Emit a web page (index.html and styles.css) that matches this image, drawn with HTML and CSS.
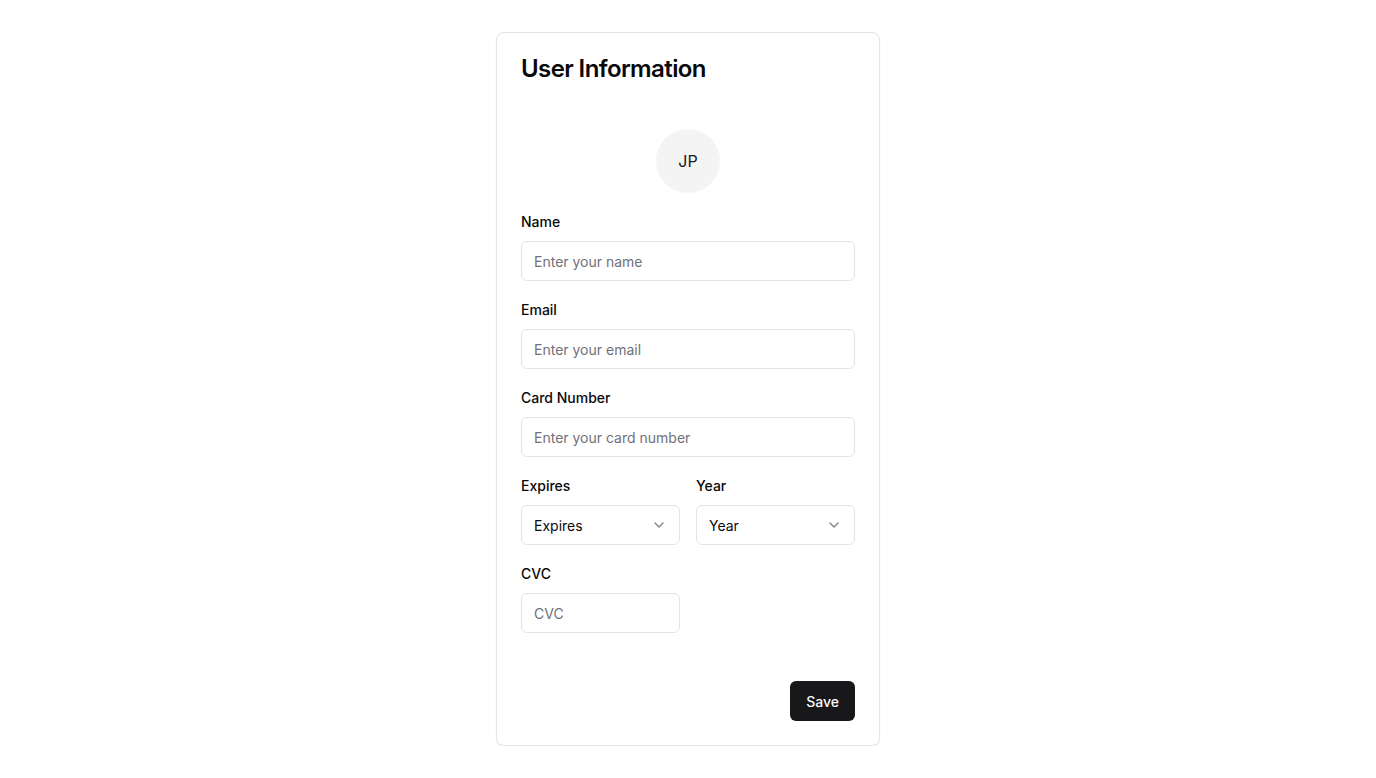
FILE: index.html
```html
<!DOCTYPE html>
<html lang="en">
<head>
<meta charset="utf-8">
<title>User Information</title>
<link rel="stylesheet" href="styles.css">
</head>
<body>
<main class="page">
  <section class="card">
    <header class="card-header">
      <h1 class="card-title">User Information</h1>
    </header>
    <div class="card-content">
      <div class="avatar-row">
        <div class="avatar">JP</div>
      </div>
      <div class="field">
        <label class="label" for="name">Name</label>
        <input class="input" id="name" type="text" placeholder="Enter your name">
      </div>
      <div class="field">
        <label class="label" for="email">Email</label>
        <input class="input" id="email" type="email" placeholder="Enter your email">
      </div>
      <div class="field">
        <label class="label" for="card">Card Number</label>
        <input class="input" id="card" type="text" placeholder="Enter your card number">
      </div>
      <div class="grid-2">
        <div class="field">
          <label class="label">Expires</label>
          <button class="select" type="button"><span>Expires</span>
            <svg class="chev" viewBox="0 0 24 24" width="16" height="16" fill="none" stroke="currentColor" stroke-width="2" stroke-linecap="round" stroke-linejoin="round"><path d="m6 9 6 6 6-6"/></svg>
          </button>
        </div>
        <div class="field">
          <label class="label">Year</label>
          <button class="select" type="button"><span>Year</span>
            <svg class="chev" viewBox="0 0 24 24" width="16" height="16" fill="none" stroke="currentColor" stroke-width="2" stroke-linecap="round" stroke-linejoin="round"><path d="m6 9 6 6 6-6"/></svg>
          </button>
        </div>
      </div>
      <div class="grid-2">
        <div class="field">
          <label class="label" for="cvc">CVC</label>
          <input class="input" id="cvc" type="text" placeholder="CVC">
        </div>
      </div>
      <div class="actions">
        <button class="btn" type="button">Save</button>
      </div>
    </div>
  </section>
</main>
</body>
</html>
```
FILE: styles.css
```css
* { box-sizing: border-box; }
html, body { margin: 0; padding: 0; background: #ffffff; }
body {
  font-family: Inter, "Liberation Sans", sans-serif;
  color: #09090b;
  -webkit-font-smoothing: antialiased;
}
.page {
  display: flex;
  justify-content: center;
  padding-top: 32px;
}
.card {
  width: 384px;
  border: 1px solid #e4e4e7;
  border-radius: 8px;
  background: #fff;
  box-shadow: 0 1px 2px rgba(0,0,0,0.05);
}
.card-header { padding: 24px; }
.card-title {
  margin: 0;
  font-size: 24px;
  line-height: 24px;
  font-weight: 600;
  letter-spacing: -0.025em;
}
.card-content {
  padding: 0 24px 24px;
  display: flex;
  flex-direction: column;
  gap: 19px;
}
.avatar-row {
  display: flex;
  justify-content: center;
  padding-top: 24px;
}
.avatar {
  width: 64px;
  height: 64px;
  border-radius: 50%;
  background: #f4f4f5;
  display: flex;
  align-items: center;
  justify-content: center;
  font-size: 16px;
  color: #18181b;
}
.field {
  display: flex;
  flex-direction: column;
  gap: 9px;
}
.label {
  font-size: 14px;
  line-height: 20px;
  font-weight: 500;
}
.input, .select {
  height: 40px;
  width: 100%;
  border: 1px solid #e4e4e7;
  border-radius: 6px;
  background: #fff;
  padding: 0 12px;
  font-family: inherit;
  font-size: 14px;
  color: #09090b;
  outline: none;
}
.input::placeholder { color: #71717a; }
.select {
  display: flex;
  align-items: center;
  justify-content: space-between;
  text-align: left;
  cursor: pointer;
}
.chev { opacity: 0.5; flex: none; }
.grid-2 {
  display: grid;
  grid-template-columns: 1fr 1fr;
  gap: 16px;
}
.actions {
  display: flex;
  justify-content: flex-end;
  padding-top: 29px;
}
.btn {
  height: 40px;
  padding: 0 16px;
  border: none;
  border-radius: 6px;
  background: #18181b;
  color: #fafafa;
  font-family: inherit;
  font-size: 14px;
  font-weight: 500;
  cursor: pointer;
}
```
